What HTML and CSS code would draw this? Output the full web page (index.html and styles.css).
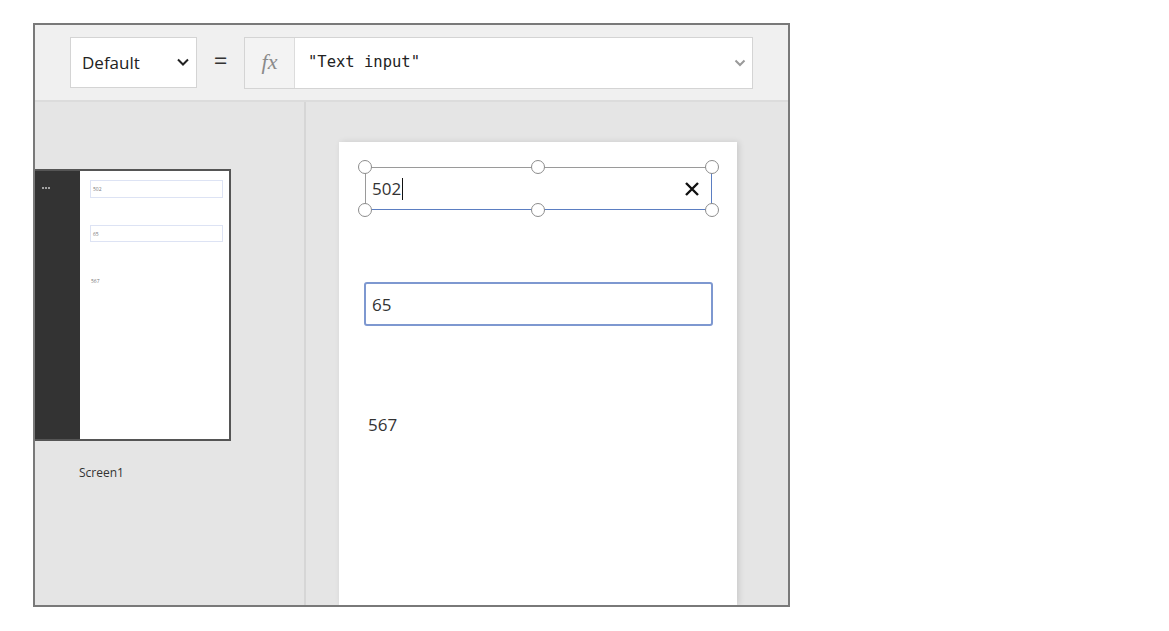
FILE: index.html
```html
<!DOCTYPE html>
<html>
<head>
<meta charset="utf-8">
<link rel="stylesheet" href="styles.css">
</head>
<body>
<div class="frame">
  <div class="toolbar">
    <div class="prop-select">
      <span class="prop-name">Default</span>
      <svg class="chev" width="12" height="8" viewBox="0 0 12 8"><path d="M1 1.5 L6 6.5 L11 1.5" fill="none" stroke="#222" stroke-width="2"/></svg>
    </div>
    <div class="equals">=</div>
    <div class="formula">
      <div class="fx">fx</div>
      <div class="formula-text">"Text input"</div>
      <svg class="fchev" width="12" height="8" viewBox="0 0 12 8"><path d="M1.5 1.5 L6 6 L10.5 1.5" fill="none" stroke="#9a9a9a" stroke-width="2"/></svg>
    </div>
  </div>
  <div class="workspace">
    <div class="left-panel">
      <div class="thumb">
        <div class="thumb-side"><span class="dot"></span><span class="dot"></span><span class="dot"></span></div>
        <div class="thumb-body">
          <div class="mini-input">502</div>
          <div class="mini-input second">65</div>
          <div class="mini-label">567</div>
        </div>
      </div>
      <div class="screen-name">Screen1</div>
    </div>
    <div class="canvas-area">
      <div class="screen">
        <div class="input selected">
          <span class="val">502</span><span class="caret"></span>
          <svg class="clear" width="16" height="16" viewBox="0 0 16 16"><path d="M2 2 L14 14 M14 2 L2 14" stroke="#111" stroke-width="2.4"/></svg>
          <span class="h tl"></span><span class="h tm"></span><span class="h tr"></span>
          <span class="h bl"></span><span class="h bm"></span><span class="h br"></span>
        </div>
        <div class="input second"><span class="val">65</span></div>
        <div class="label">567</div>
      </div>
    </div>
  </div>
</div>
</body>
</html>
```

FILE: styles.css
```css
* { box-sizing: border-box; }
body {
  margin: 0;
  background: #fff;
  font-family: "Open Sans", "Noto Sans", sans-serif;
}
.frame {
  margin: 23px 0 0 33px;
  width: 757px;
  height: 584px;
  border: 2px solid #797979;
  display: flex;
  flex-direction: column;
  overflow: hidden;
}
.toolbar {
  height: 77px;
  flex: none;
  background: #f0f0f0;
  border-bottom: 2px solid #dcdcdc;
  display: flex;
  align-items: flex-start;
  padding: 12px 0 0 35px;
}
.prop-select {
  width: 127px;
  height: 51px;
  background: #fff;
  border: 1px solid #d4d4d4;
  display: flex;
  align-items: center;
  justify-content: space-between;
  padding: 0 7px 0 11px;
}
.prop-name { font-size: 17px; color: #222; }
.chev { margin-top: -2px; }
.equals {
  width: 47px;
  text-align: center;
  font-size: 24px;
  line-height: 46px;
  color: #333;
}
.formula {
  width: 509px;
  height: 52px;
  background: #fff;
  border: 1px solid #d4d4d4;
  display: flex;
  align-items: center;
}
.fx {
  width: 50px;
  height: 100%;
  background: #f3f3f3;
  border-right: 1px solid #dcdcdc;
  font-family: "Liberation Serif", serif;
  font-style: italic;
  font-size: 22px;
  color: #8a8a8a;
  display: flex;
  align-items: center;
  justify-content: center;
  padding-bottom: 3px;
}
.formula-text {
  flex: 1;
  padding-left: 13px;
  font-family: "DejaVu Sans Mono", monospace;
  font-size: 15.5px;
  color: #222;
  padding-bottom: 3px;
}
.fchev { margin-right: 6px; }
.workspace {
  flex: 1;
  display: flex;
  background: #e5e5e5;
}
.left-panel {
  width: 271px;
  flex: none;
  border-right: 2px solid #d6d6d6;
  padding-top: 67px;
}
.thumb {
  width: 196px;
  height: 272px;
  border: 2px solid #555;
  border-left: none;
  display: flex;
  background: #fff;
}
.thumb-side {
  width: 45px;
  background: #333;
  padding: 16px 0 0 7px;
  display: flex;
  align-items: flex-start;
  gap: 1px;
}
.dot {
  width: 2px;
  height: 2px;
  border-radius: 50%;
  background: #c8c8c8;
}
.thumb-body {
  flex: 1;
  padding: 9px 6px 0 10px;
}
.mini-input {
  height: 18px;
  border: 1px solid #dde3f4;
  font-size: 5px;
  color: #777;
  padding: 5px 0 0 2px;
}
.mini-input.second { margin-top: 27px; height: 17px; }
.mini-label {
  font-size: 5px;
  color: #777;
  margin: 36px 0 0 1px;
}
.screen-name {
  font-size: 12px;
  color: #333;
  margin: 23px 0 0 44px;
}
.canvas-area {
  flex: 1;
  padding: 40px 0 0 33px;
}
.screen {
  width: 398px;
  height: 100%;
  background: #fff;
  box-shadow: 2px 0 6px rgba(0,0,0,0.12);
  padding: 25px 0 0 26px;
}
.input {
  position: relative;
  width: 347px;
  height: 43px;
  border: 1px solid;
  border-color: #9a9a9a #5b7ec2 #5b7ec2 #9a9a9a;
  display: flex;
  align-items: center;
  padding-left: 6px;
  font-size: 17px;
  color: #333;
}
.caret {
  width: 1px;
  height: 22px;
  background: #111;
  margin-left: 1px;
}
.clear { position: absolute; right: 11px; top: 13px; }
.h {
  position: absolute;
  width: 14px;
  height: 14px;
  border: 1.5px solid #8c8c8c;
  border-radius: 50%;
  background: #fff;
}
.tl { left: -8px; top: -8px; }
.tm { left: 165px; top: -8px; }
.tr { right: -8px; top: -8px; }
.bl { left: -8px; bottom: -8px; }
.bm { left: 165px; bottom: -8px; }
.br { right: -8px; bottom: -8px; }
.input.second {
  width: 349px;
  height: 44px;
  margin: 72px 0 0 -1px;
  border: 2px solid #7e98d0;
  border-radius: 3px;
  padding-left: 6px;
}
.label {
  font-size: 17px;
  color: #333;
  margin: 87px 0 0 3px;
}
```
